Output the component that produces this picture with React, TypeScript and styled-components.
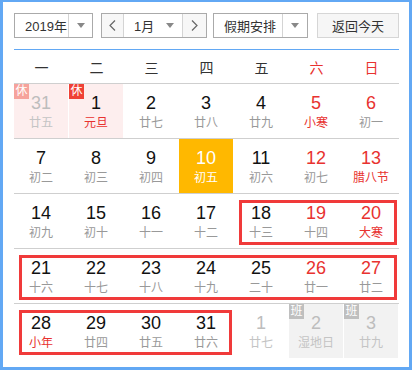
import React from "react";
import styled, { createGlobalStyle } from "styled-components";

const GlobalStyle = createGlobalStyle`
  body {
    margin: 0;
    background: #fff;
    font-family: "Liberation Sans", "Noto Sans CJK SC", sans-serif;
  }
`;

const RED = "#e8322f";

type Day = {
  n: number;
  lunar: string;
  other?: boolean;
  redNum?: boolean;
  redLunar?: boolean;
  today?: boolean;
  badge?: "休" | "班";
  holiday?: boolean;
};

const weeks: Day[][] = [
  [
    { n: 31, lunar: "廿五", other: true, badge: "休", holiday: true },
    { n: 1, lunar: "元旦", redLunar: true, badge: "休", holiday: true },
    { n: 2, lunar: "廿七" },
    { n: 3, lunar: "廿八" },
    { n: 4, lunar: "廿九" },
    { n: 5, lunar: "小寒", redNum: true, redLunar: true },
    { n: 6, lunar: "初一", redNum: true },
  ],
  [
    { n: 7, lunar: "初二" },
    { n: 8, lunar: "初三" },
    { n: 9, lunar: "初四" },
    { n: 10, lunar: "初五", today: true },
    { n: 11, lunar: "初六" },
    { n: 12, lunar: "初七", redNum: true },
    { n: 13, lunar: "腊八节", redNum: true, redLunar: true },
  ],
  [
    { n: 14, lunar: "初九" },
    { n: 15, lunar: "初十" },
    { n: 16, lunar: "十一" },
    { n: 17, lunar: "十二" },
    { n: 18, lunar: "十三" },
    { n: 19, lunar: "十四", redNum: true },
    { n: 20, lunar: "大寒", redNum: true, redLunar: true },
  ],
  [
    { n: 21, lunar: "十六" },
    { n: 22, lunar: "十七" },
    { n: 23, lunar: "十八" },
    { n: 24, lunar: "十九" },
    { n: 25, lunar: "二十" },
    { n: 26, lunar: "廿一", redNum: true },
    { n: 27, lunar: "廿二", redNum: true },
  ],
  [
    { n: 28, lunar: "小年", redLunar: true },
    { n: 29, lunar: "廿四" },
    { n: 30, lunar: "廿五" },
    { n: 31, lunar: "廿六" },
    { n: 1, lunar: "廿七", other: true },
    { n: 2, lunar: "湿地日", other: true, badge: "班" },
    { n: 3, lunar: "廿九", other: true, badge: "班" },
  ],
];

// row, first column, number of columns
const marks = [
  { row: 2, col: 4, span: 3 },
  { row: 3, col: 0, span: 7 },
  { row: 4, col: 0, span: 4 },
];

const Frame = styled.div`
  box-sizing: border-box;
  width: 412px;
  height: 370px;
  border: 3px solid #62a8f4;
  border-top-width: 2px;
  padding: 11px 10px 0 11px;
`;

const Toolbar = styled.div`
  display: flex;
  align-items: center;
  height: 25px;
  font-size: 13px;
  color: #333;
`;

const SelectBox = styled.div<{ $w: number; $ml?: number }>`
  box-sizing: border-box;
  display: flex;
  width: ${(p) => p.$w}px;
  height: 25px;
  margin-left: ${(p) => p.$ml || 0}px;
  border: 1px solid #aaa;
  background: #fff;
`;

const SelectLabel = styled.div`
  flex: 1;
  display: flex;
  align-items: center;
  padding-left: 10px;
  border-right: 1px solid #d4d4d4;
`;

const CaretCell = styled.div<{ $w: number }>`
  width: ${(p) => p.$w}px;
  display: flex;
  align-items: center;
  justify-content: center;
`;

const Caret = styled.span`
  width: 0;
  height: 0;
  border-left: 4px solid transparent;
  border-right: 4px solid transparent;
  border-top: 5px solid #888;
`;

const NavBtn = styled.div<{ $w: number; $side: "l" | "r" }>`
  width: ${(p) => p.$w}px;
  display: flex;
  align-items: center;
  justify-content: center;
  background: #f7f7f7;
  ${(p) => (p.$side === "l" ? "border-right" : "border-left")}: 1px solid #d4d4d4;
`;

const MonthSel = styled.div`
  flex: 1;
  display: flex;
  align-items: center;
  justify-content: space-between;
  padding: 0 8px 0 10px;
`;

const TodayBtn = styled.div`
  box-sizing: border-box;
  width: 82px;
  height: 25px;
  margin-left: 9px;
  display: flex;
  align-items: center;
  justify-content: center;
  border: 1px solid #d6d6d6;
  background: #f6f6f6;
`;

const HeadRule = styled.div`
  margin-top: 11px;
  width: 385px;
  height: 1px;
  background: #62a8f4;
`;

const Grid7 = styled.div`
  display: grid;
  grid-template-columns: repeat(7, 55px);
`;

const WeekHead = styled(Grid7)`
  height: 33px;
  align-items: center;
  text-align: center;
  font-size: 14px;
`;

const WeekName = styled.div<{ $red?: boolean }>`
  color: ${(p) => (p.$red ? RED : "#333")};
`;

const Body = styled.div`
  position: relative;
  width: 385px;
`;

const Row = styled(Grid7)`
  height: 54px;
  border-top: 1px solid #cfcfcf;
`;

const Cell = styled.div<{ $bg: string }>`
  position: relative;
  margin-right: 1px;
  background: ${(p) => p.$bg};
  display: flex;
  flex-direction: column;
  align-items: center;
  padding-top: 9px;
  box-sizing: border-box;
`;

const Num = styled.div<{ $c: string }>`
  font-size: 18px;
  line-height: 20px;
  color: ${(p) => p.$c};
`;

const Lunar = styled.div<{ $c: string }>`
  margin-top: 2px;
  font-size: 12px;
  line-height: 16px;
  color: ${(p) => p.$c};
`;

const Badge = styled.span<{ $bg: string }>`
  position: absolute;
  left: 0;
  top: 0;
  width: 15px;
  height: 15px;
  line-height: 15px;
  text-align: center;
  font-size: 12px;
  color: #fff;
  background: ${(p) => p.$bg};
`;

const Mark = styled.div`
  position: absolute;
  box-sizing: border-box;
  height: 45px;
  border: 3px solid #f03a3a;
  pointer-events: none;
`;

function Chevron({ dir }: { dir: "l" | "r" }) {
  return (
    <svg width="7" height="11" viewBox="0 0 7 11">
      <polyline
        points={dir === "l" ? "6,0.5 1,5.5 6,10.5" : "1,0.5 6,5.5 1,10.5"}
        fill="none"
        stroke="#666"
        strokeWidth="1.2"
      />
    </svg>
  );
}

function DayCell({ d }: { d: Day }) {
  let bg = "#fff";
  if (d.holiday) bg = "#fdeeee";
  if (d.badge === "班") bg = "#f2f2f2";
  if (d.today) bg = "#ffb800";

  let numColor = "#111";
  let lunarColor = "#999";
  if (d.redNum) numColor = RED;
  if (d.redLunar) lunarColor = RED;
  if (d.other) {
    numColor = "#bdbdbd";
    lunarColor = "#c4c4c4";
  }
  if (d.today) {
    numColor = "#fff";
    lunarColor = "#fff";
  }

  let badgeBg = "";
  if (d.badge === "休") badgeBg = d.other ? "#f6a39c" : "#ef4136";
  if (d.badge === "班") badgeBg = "#bfbfbf";

  return (
    <Cell $bg={bg}>
      {d.badge && <Badge $bg={badgeBg}>{d.badge}</Badge>}
      <Num $c={numColor}>{d.n}</Num>
      <Lunar $c={lunarColor}>{d.lunar}</Lunar>
    </Cell>
  );
}

export default function App() {
  const names = ["一", "二", "三", "四", "五", "六", "日"];
  return (
    <>
      <GlobalStyle />
      <Frame>
        <Toolbar>
          <SelectBox $w={79}>
            <SelectLabel>2019年</SelectLabel>
            <CaretCell $w={23}>
              <Caret />
            </CaretCell>
          </SelectBox>
          <SelectBox $w={106} $ml={8}>
            <NavBtn $w={21} $side="l">
              <Chevron dir="l" />
            </NavBtn>
            <MonthSel>
              <span>1月</span>
              <Caret />
            </MonthSel>
            <NavBtn $w={23} $side="r">
              <Chevron dir="r" />
            </NavBtn>
          </SelectBox>
          <SelectBox $w={95} $ml={6}>
            <SelectLabel>假期安排</SelectLabel>
            <CaretCell $w={24}>
              <Caret />
            </CaretCell>
          </SelectBox>
          <TodayBtn>返回今天</TodayBtn>
        </Toolbar>
        <HeadRule />
        <WeekHead>
          {names.map((n, i) => (
            <WeekName key={n} $red={i >= 5}>
              {n}
            </WeekName>
          ))}
        </WeekHead>
        <Body>
          {weeks.map((w, i) => (
            <Row key={i}>
              {w.map((d, j) => (
                <DayCell key={j} d={d} />
              ))}
            </Row>
          ))}
          {marks.map((m, i) => (
            <Mark
              key={i}
              style={{ left: m.col * 55 + 5, width: m.span * 55 - 7, top: m.row * 55 + 7 }}
            />
          ))}
        </Body>
      </Frame>
    </>
  );
}
